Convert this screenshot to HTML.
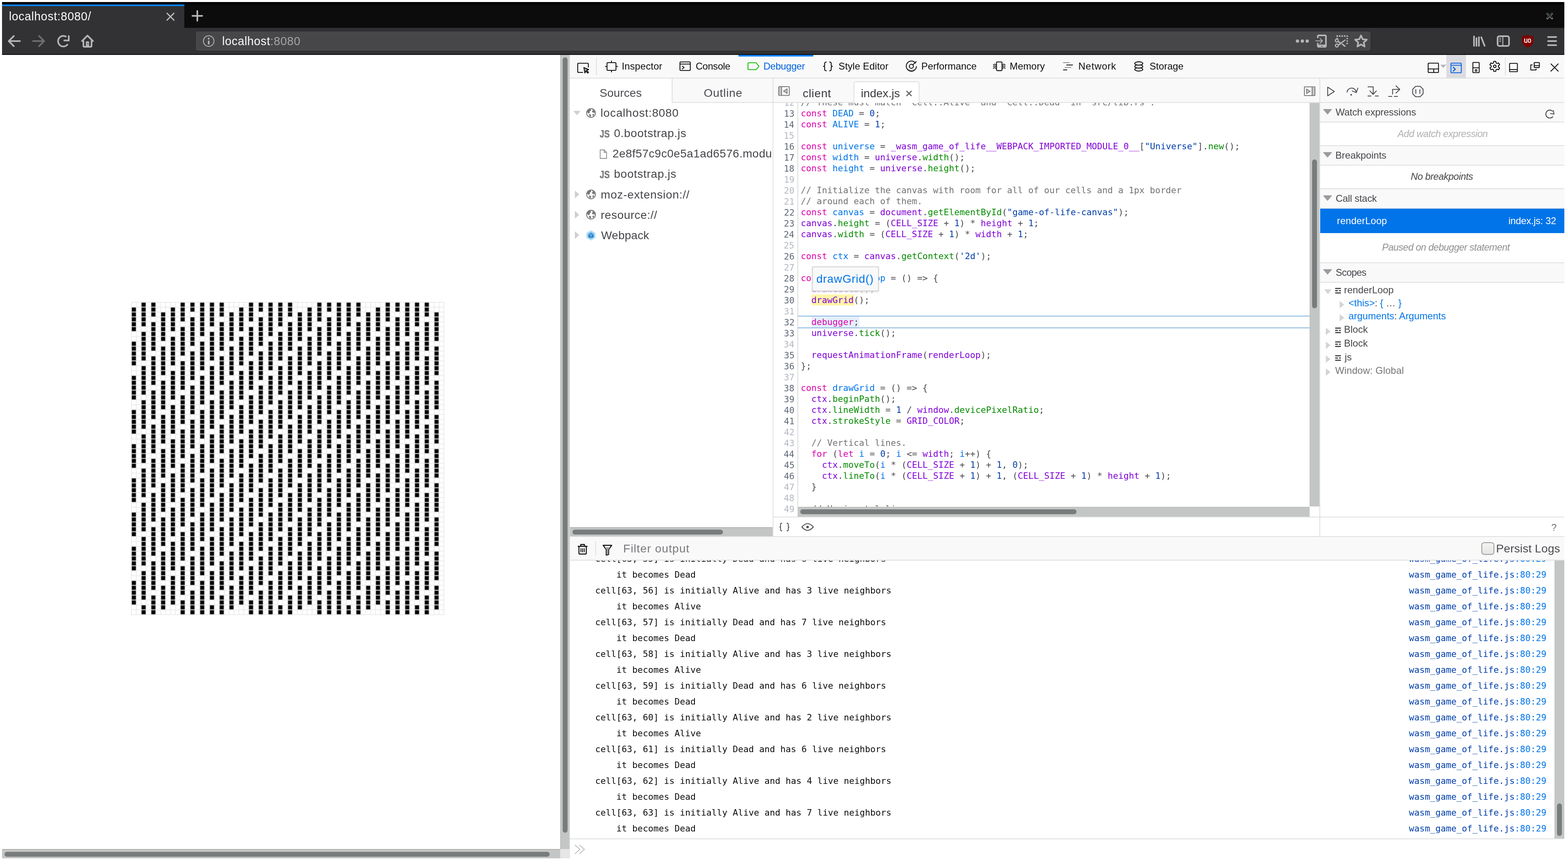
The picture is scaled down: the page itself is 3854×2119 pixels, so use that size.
<!DOCTYPE html>
<html lang="en"><head><meta charset="utf-8"><title>localhost:8080/</title>
<style>
*{box-sizing:border-box}
html,body{margin:0;padding:0}
body{width:3854px;height:2119px;background:#fff;position:relative;overflow:hidden;font-family:"Liberation Sans",sans-serif}
.a{position:absolute}
.t{line-height:1;white-space:pre;margin:0;padding:0}
.s{font-family:"Liberation Sans",sans-serif}
.m{font-family:"DejaVu Sans Mono","Liberation Mono",monospace}
.d{font-family:"DejaVu Sans","Liberation Sans",sans-serif}
.b{font-weight:bold}
.i{font-style:italic}
svg{position:absolute;left:0;top:0;overflow:visible}
#root{position:absolute;left:0;top:0;width:3854px;height:2119px;will-change:transform}
</style></head>
<body>
<div id="root">
<div class="a" style="left:5px;top:5px;width:3840px;height:6px;background:#000;"></div><div class="a" style="left:5px;top:11px;width:3840px;height:57px;background:#0c0c0d;"></div><div class="a" style="left:5px;top:11px;width:448px;height:4px;background:#0a84ff;"></div><div class="a" style="left:5px;top:15px;width:448px;height:53px;background:#323234;"></div><div class="a" style="left:5px;top:68px;width:3840px;height:65px;background:#323234;"></div><div class="a" style="left:453px;top:68px;width:3392px;height:1px;background:#1e1e1f;"></div><div class="a" style="left:5px;top:133px;width:3840px;height:2px;background:#0a0a0b;"></div><div class="a" style="left:481px;top:77px;width:2888px;height:48px;background:#474749;border-radius:5px;box-shadow:0 0 0 1px rgba(0,0,0,.28);"></div><span class="a t s" style="left:21.88px;top:26px;font-size:28.6px;color:#f9f9fa;letter-spacing:0.67px;">localhost:8080/</span><span class="a t s" style="left:546.12px;top:87px;font-size:28.6px;color:#f9f9fa;letter-spacing:0.58px;">localhost<span style="color:#a3a3a5">:8080</span></span><svg class="a" style="left:322px;top:742px" width="770" height="770" viewBox="0 0 770 770" shape-rendering="crispEdges"><defs><filter id="cb" x="0" y="0" width="1" height="1" color-interpolation-filters="sRGB"><feConvolveMatrix order="3" kernelMatrix="1 2 1 2 4 2 1 2 1" divisor="16" edgeMode="duplicate" preserveAlpha="true"/></filter><pattern id="gv" width="12" height="770" patternUnits="userSpaceOnUse"><rect width="2" height="770" fill="#ebebeb"/></pattern><pattern id="gh" width="770" height="12" patternUnits="userSpaceOnUse"><rect width="770" height="2" fill="#ebebeb"/></pattern></defs><g filter="url(#cb)"><rect width="770" height="770" fill="#fff"/><path d="M2 14h10v58h-10zM2 98h10v58h-10zM2 182h10v58h-10zM2 266h10v58h-10zM2 350h10v58h-10zM2 434h10v58h-10zM2 518h10v58h-10zM2 602h10v58h-10zM2 686h10v58h-10zM26 2h10v58h-10zM26 74h10v70h-10zM26 158h10v70h-10zM26 242h10v70h-10zM26 326h10v70h-10zM26 410h10v70h-10zM26 494h10v70h-10zM26 578h10v70h-10zM26 662h10v70h-10zM26 746h10v22h-10zM50 2h10v34h-10zM50 50h10v70h-10zM50 134h10v70h-10zM50 218h10v70h-10zM50 302h10v70h-10zM50 386h10v70h-10zM50 470h10v70h-10zM50 554h10v70h-10zM50 638h10v70h-10zM50 722h10v46h-10zM74 26h10v70h-10zM74 110h10v70h-10zM74 194h10v70h-10zM74 278h10v70h-10zM74 362h10v70h-10zM74 446h10v70h-10zM74 530h10v70h-10zM74 614h10v70h-10zM74 698h10v58h-10zM98 14h10v58h-10zM98 86h10v70h-10zM98 170h10v70h-10zM98 254h10v70h-10zM98 338h10v70h-10zM98 422h10v70h-10zM98 506h10v70h-10zM98 590h10v70h-10zM98 674h10v70h-10zM122 2h10v46h-10zM122 62h10v70h-10zM122 146h10v70h-10zM122 230h10v70h-10zM122 314h10v70h-10zM122 398h10v70h-10zM122 482h10v70h-10zM122 566h10v70h-10zM122 650h10v70h-10zM122 734h10v34h-10zM146 2h10v22h-10zM146 38h10v70h-10zM146 122h10v70h-10zM146 206h10v70h-10zM146 290h10v70h-10zM146 374h10v70h-10zM146 458h10v70h-10zM146 542h10v70h-10zM146 626h10v70h-10zM146 710h10v58h-10zM170 2h10v82h-10zM170 98h10v70h-10zM170 182h10v70h-10zM170 266h10v70h-10zM170 350h10v70h-10zM170 434h10v70h-10zM170 518h10v70h-10zM170 602h10v70h-10zM170 686h10v82h-10zM194 2h10v58h-10zM194 74h10v70h-10zM194 158h10v70h-10zM194 242h10v70h-10zM194 326h10v70h-10zM194 410h10v70h-10zM194 494h10v70h-10zM194 578h10v70h-10zM194 662h10v70h-10zM194 746h10v22h-10zM218 2h10v34h-10zM218 50h10v70h-10zM218 134h10v70h-10zM218 218h10v70h-10zM218 302h10v70h-10zM218 386h10v70h-10zM218 470h10v70h-10zM218 554h10v70h-10zM218 638h10v70h-10zM218 722h10v46h-10zM242 26h10v70h-10zM242 110h10v70h-10zM242 194h10v70h-10zM242 278h10v70h-10zM242 362h10v70h-10zM242 446h10v70h-10zM242 530h10v70h-10zM242 614h10v70h-10zM242 698h10v58h-10zM266 14h10v58h-10zM266 86h10v70h-10zM266 170h10v70h-10zM266 254h10v70h-10zM266 338h10v70h-10zM266 422h10v70h-10zM266 506h10v70h-10zM266 590h10v70h-10zM266 674h10v70h-10zM290 2h10v46h-10zM290 62h10v70h-10zM290 146h10v70h-10zM290 230h10v70h-10zM290 314h10v70h-10zM290 398h10v70h-10zM290 482h10v70h-10zM290 566h10v70h-10zM290 650h10v70h-10zM290 734h10v34h-10zM314 2h10v22h-10zM314 38h10v70h-10zM314 122h10v70h-10zM314 206h10v70h-10zM314 290h10v70h-10zM314 374h10v70h-10zM314 458h10v70h-10zM314 542h10v70h-10zM314 626h10v70h-10zM314 710h10v58h-10zM338 2h10v82h-10zM338 98h10v70h-10zM338 182h10v70h-10zM338 266h10v70h-10zM338 350h10v70h-10zM338 434h10v70h-10zM338 518h10v70h-10zM338 602h10v70h-10zM338 686h10v82h-10zM362 2h10v58h-10zM362 74h10v70h-10zM362 158h10v70h-10zM362 242h10v70h-10zM362 326h10v70h-10zM362 410h10v70h-10zM362 494h10v70h-10zM362 578h10v70h-10zM362 662h10v70h-10zM362 746h10v22h-10zM386 2h10v34h-10zM386 50h10v70h-10zM386 134h10v70h-10zM386 218h10v70h-10zM386 302h10v70h-10zM386 386h10v70h-10zM386 470h10v70h-10zM386 554h10v70h-10zM386 638h10v70h-10zM386 722h10v46h-10zM410 26h10v70h-10zM410 110h10v70h-10zM410 194h10v70h-10zM410 278h10v70h-10zM410 362h10v70h-10zM410 446h10v70h-10zM410 530h10v70h-10zM410 614h10v70h-10zM410 698h10v58h-10zM434 14h10v58h-10zM434 86h10v70h-10zM434 170h10v70h-10zM434 254h10v70h-10zM434 338h10v70h-10zM434 422h10v70h-10zM434 506h10v70h-10zM434 590h10v70h-10zM434 674h10v70h-10zM458 2h10v46h-10zM458 62h10v70h-10zM458 146h10v70h-10zM458 230h10v70h-10zM458 314h10v70h-10zM458 398h10v70h-10zM458 482h10v70h-10zM458 566h10v70h-10zM458 650h10v70h-10zM458 734h10v34h-10zM482 2h10v22h-10zM482 38h10v70h-10zM482 122h10v70h-10zM482 206h10v70h-10zM482 290h10v70h-10zM482 374h10v70h-10zM482 458h10v70h-10zM482 542h10v70h-10zM482 626h10v70h-10zM482 710h10v58h-10zM506 2h10v82h-10zM506 98h10v70h-10zM506 182h10v70h-10zM506 266h10v70h-10zM506 350h10v70h-10zM506 434h10v70h-10zM506 518h10v70h-10zM506 602h10v70h-10zM506 686h10v82h-10zM530 2h10v58h-10zM530 74h10v70h-10zM530 158h10v70h-10zM530 242h10v70h-10zM530 326h10v70h-10zM530 410h10v70h-10zM530 494h10v70h-10zM530 578h10v70h-10zM530 662h10v70h-10zM530 746h10v22h-10zM554 2h10v34h-10zM554 50h10v70h-10zM554 134h10v70h-10zM554 218h10v70h-10zM554 302h10v70h-10zM554 386h10v70h-10zM554 470h10v70h-10zM554 554h10v70h-10zM554 638h10v70h-10zM554 722h10v46h-10zM578 26h10v70h-10zM578 110h10v70h-10zM578 194h10v70h-10zM578 278h10v70h-10zM578 362h10v70h-10zM578 446h10v70h-10zM578 530h10v70h-10zM578 614h10v70h-10zM578 698h10v58h-10zM602 14h10v58h-10zM602 86h10v70h-10zM602 170h10v70h-10zM602 254h10v70h-10zM602 338h10v70h-10zM602 422h10v70h-10zM602 506h10v70h-10zM602 590h10v70h-10zM602 674h10v70h-10zM626 2h10v46h-10zM626 62h10v70h-10zM626 146h10v70h-10zM626 230h10v70h-10zM626 314h10v70h-10zM626 398h10v70h-10zM626 482h10v70h-10zM626 566h10v70h-10zM626 650h10v70h-10zM626 734h10v34h-10zM650 2h10v22h-10zM650 38h10v70h-10zM650 122h10v70h-10zM650 206h10v70h-10zM650 290h10v70h-10zM650 374h10v70h-10zM650 458h10v70h-10zM650 542h10v70h-10zM650 626h10v70h-10zM650 710h10v58h-10zM674 2h10v82h-10zM674 98h10v70h-10zM674 182h10v70h-10zM674 266h10v70h-10zM674 350h10v70h-10zM674 434h10v70h-10zM674 518h10v70h-10zM674 602h10v70h-10zM674 686h10v82h-10zM698 2h10v58h-10zM698 74h10v70h-10zM698 158h10v70h-10zM698 242h10v70h-10zM698 326h10v70h-10zM698 410h10v70h-10zM698 494h10v70h-10zM698 578h10v70h-10zM698 662h10v70h-10zM698 746h10v22h-10zM722 2h10v34h-10zM722 50h10v70h-10zM722 134h10v70h-10zM722 218h10v70h-10zM722 302h10v70h-10zM722 386h10v70h-10zM722 470h10v70h-10zM722 554h10v70h-10zM722 638h10v70h-10zM722 722h10v46h-10zM746 26h10v70h-10zM746 110h10v70h-10zM746 194h10v70h-10zM746 278h10v70h-10zM746 362h10v70h-10zM746 446h10v70h-10zM746 530h10v70h-10zM746 614h10v70h-10zM746 698h10v58h-10z" fill="#000"/><rect width="770" height="770" fill="url(#gh)"/><rect width="770" height="770" fill="url(#gv)"/></g></svg><div class="a" style="left:1377px;top:135px;width:24px;height:1952px;background:#c4c6c5;border-left:1px solid #b2b3b0;border-right:2px solid #d9dad9;"></div><div class="a" style="left:1383px;top:141px;width:12px;height:1906px;background:#787c7d;border-radius:6px;"></div><div class="a" style="left:5px;top:2087px;width:1372px;height:23px;background:#c4c6c5;border-top:2px solid #b2b3b0;"></div><div class="a" style="left:11px;top:2093.5px;width:1340px;height:12px;background:#787c7d;border-radius:6px;"></div><div class="a" style="left:1377px;top:2087px;width:24px;height:23px;background:#e6e6e6;"></div><div class="a" style="left:1401px;top:135px;width:2444px;height:56px;background:#f9f9fa;"></div><div class="a" style="left:1401px;top:191px;width:2444px;height:2px;background:#dfdfe1;"></div><div class="a" style="left:1815px;top:135px;width:184px;height:3.5px;background:#0a84ff;"></div><div class="a" style="left:3555px;top:135px;width:48px;height:56px;background:#dcdce0;"></div><div class="a" style="left:1465px;top:141.5px;width:2px;height:43px;background:#e0e0e2;"></div><div class="a" style="left:3698.7px;top:141px;width:2px;height:44px;background:#e0e0e2;"></div><span class="a t s" style="left:1528.28px;top:151px;font-size:23.8px;color:#0c0c0d;letter-spacing:0.2px;">Inspector</span><span class="a t s" style="left:1709.88px;top:151px;font-size:23.8px;color:#0c0c0d;letter-spacing:-0.31px;">Console</span><span class="a t s" style="left:1876.53px;top:151px;font-size:23.8px;color:#0060df;letter-spacing:-0.35px;">Debugger</span><span class="a t s" style="left:2061px;top:151px;font-size:23.8px;color:#0c0c0d;letter-spacing:0.08px;">Style Editor</span><span class="a t s" style="left:2264.62px;top:151px;font-size:23.8px;color:#0c0c0d;letter-spacing:-0.04px;">Performance</span><span class="a t s" style="left:2481.82px;top:151px;font-size:23.8px;color:#0c0c0d;letter-spacing:0.06px;">Memory</span><span class="a t s" style="left:2650.62px;top:151px;font-size:23.8px;color:#0c0c0d;letter-spacing:0.83px;">Network</span><span class="a t s" style="left:2825.4px;top:151px;font-size:23.8px;color:#0c0c0d;letter-spacing:0.04px;">Storage</span><div class="a" style="left:1401px;top:193px;width:250px;height:60px;background:#fff;"></div><div class="a" style="left:1651px;top:193px;width:249px;height:60px;background:#f9f9fa;border-left:2px solid #e0e0e2;border-bottom:2px solid #e0e0e2;"></div><span class="a t s" style="left:1473.75px;top:214px;font-size:28.2px;color:#4a4a4f;letter-spacing:0.03px;">Sources</span><span class="a t s" style="left:1729.75px;top:214px;font-size:28.2px;color:#4a4a4f;letter-spacing:0.86px;">Outline</span><div class="a" style="left:1401px;top:254px;width:498px;height:1042px;overflow:hidden"><span class="a t s" style="left:75.12px;top:9px;font-size:28.2px;color:#45454a;letter-spacing:0.75px;">localhost:8080</span><span class="a t s" style="left:108px;top:59px;font-size:28.2px;color:#45454a;letter-spacing:0.64px;">0.bootstrap.js</span><span class="a t s" style="left:104.62px;top:109px;font-size:28.2px;color:#45454a;letter-spacing:0.45px;">2e8f57c9c0e5a1ad6576.module.wasm</span><span class="a t s" style="left:107.95px;top:159px;font-size:28.2px;color:#45454a;letter-spacing:0.68px;">bootstrap.js</span><span class="a t s" style="left:75.42px;top:210px;font-size:28.2px;color:#45454a;letter-spacing:0.75px;">moz-extension://</span><span class="a t s" style="left:75.42px;top:260px;font-size:28.2px;color:#45454a;letter-spacing:0.55px;">resource://</span><span class="a t s" style="left:76.58px;top:310px;font-size:28.2px;color:#45454a;letter-spacing:0.15px;">Webpack</span></div><span class="a t s b" style="left:1474.1px;top:317px;font-size:25.5px;color:#7d7d80;transform:scaleX(0.7896);transform-origin:0 0;-webkit-text-stroke:.7px #7d7d80;">JS</span><span class="a t s b" style="left:1474.1px;top:417px;font-size:25.5px;color:#7d7d80;transform:scaleX(0.7896);transform-origin:0 0;-webkit-text-stroke:.7px #7d7d80;">JS</span><div class="a" style="left:1401px;top:1296px;width:498px;height:22px;background:#c4c6c5;border-top:2px solid #b2b3b0;"></div><div class="a" style="left:1407px;top:1302px;width:370px;height:12px;background:#787c7d;border-radius:6px;"></div><div class="a" style="left:1899px;top:193px;width:2px;height:1125px;background:#e0e0e2;"></div><div class="a" style="left:1901px;top:193px;width:1342px;height:58px;background:#f9f9fa;"></div><div class="a" style="left:1901px;top:251px;width:1342px;height:2px;background:#e0e0e2;"></div><div class="a" style="left:2097.5px;top:200px;width:162px;height:53px;background:#fff;border:2px solid #e0e0e2;border-bottom:none;border-radius:5px 5px 0 0;"></div><span class="a t s" style="left:1972.88px;top:215px;font-size:28.2px;color:#38383d;letter-spacing:0.74px;">client</span><span class="a t s" style="left:2116.12px;top:215px;font-size:28.2px;color:#38383d;letter-spacing:0.04px;">index.js</span><div class="a" style="left:1901px;top:253px;width:1342px;height:1017px;overflow:hidden;background:#fff"><div class="a" style="left:58.5px;top:0px;width:2px;height:1017px;background:#dcdcde;"></div><div class="a" style="left:94px;top:471px;width:104.5px;height:27px;background:#fff5a8;"></div><div class="a" style="left:60px;top:523px;width:1260px;height:2px;background:#85b5dd;"></div><div class="a" style="left:60px;top:552px;width:1260px;height:2px;background:#85b5dd;"></div><div class="a" style="left:94px;top:525px;width:117px;height:27px;background:#e4effc;"></div><span class="a t m" style="left:26.04px;top:-11px;font-size:21.6px;color:#b3b8c0;">12</span><span class="a t m" style="left:67.3px;top:-12px;font-size:21.6px;color:#4a4a4f;"><span style="color:#737373">// These must match `Cell::Alive` and `Cell::Dead` in `src/lib.rs`.</span></span><span class="a t m" style="left:25.79px;top:16px;font-size:21.6px;color:#5f6876;">13</span><span class="a t m" style="left:67.3px;top:15px;font-size:21.6px;color:#4a4a4f;"><span style="color:#dd00a9">const</span> <span style="color:#0074e8">DEAD</span> = <span style="color:#003eaa">0</span>;</span><span class="a t m" style="left:25.29px;top:43px;font-size:21.6px;color:#5f6876;">14</span><span class="a t m" style="left:67.3px;top:42px;font-size:21.6px;color:#4a4a4f;"><span style="color:#dd00a9">const</span> <span style="color:#0074e8">ALIVE</span> = <span style="color:#003eaa">1</span>;</span><span class="a t m" style="left:25.33px;top:70px;font-size:21.6px;color:#b3b8c0;">15</span><span class="a t m" style="left:25.67px;top:97px;font-size:21.6px;color:#5f6876;">16</span><span class="a t m" style="left:67.3px;top:96px;font-size:21.6px;color:#4a4a4f;"><span style="color:#dd00a9">const</span> <span style="color:#0074e8">universe</span> = <span style="color:#8000d7">_wasm_game_of_life__WEBPACK_IMPORTED_MODULE_0__</span>[<span style="color:#003eaa">&quot;Universe&quot;</span>].<span style="color:#058b00">new</span>();</span><span class="a t m" style="left:25.79px;top:124px;font-size:21.6px;color:#5f6876;">17</span><span class="a t m" style="left:67.3px;top:123px;font-size:21.6px;color:#4a4a4f;"><span style="color:#dd00a9">const</span> <span style="color:#0074e8">width</span> = <span style="color:#8000d7">universe</span>.<span style="color:#058b00">width</span>();</span><span class="a t m" style="left:25.54px;top:151px;font-size:21.6px;color:#5f6876;">18</span><span class="a t m" style="left:67.3px;top:150px;font-size:21.6px;color:#4a4a4f;"><span style="color:#dd00a9">const</span> <span style="color:#0074e8">height</span> = <span style="color:#8000d7">universe</span>.<span style="color:#058b00">height</span>();</span><span class="a t m" style="left:25.67px;top:178px;font-size:21.6px;color:#b3b8c0;">19</span><span class="a t m" style="left:25.67px;top:205px;font-size:21.6px;color:#b3b8c0;">20</span><span class="a t m" style="left:67.3px;top:204px;font-size:21.6px;color:#4a4a4f;"><span style="color:#737373">// Initialize the canvas with room for all of our cells and a 1px border</span></span><span class="a t m" style="left:25.67px;top:232px;font-size:21.6px;color:#b3b8c0;">21</span><span class="a t m" style="left:67.3px;top:231px;font-size:21.6px;color:#4a4a4f;"><span style="color:#737373">// around each of them.</span></span><span class="a t m" style="left:26.04px;top:259px;font-size:21.6px;color:#5f6876;">22</span><span class="a t m" style="left:67.3px;top:258px;font-size:21.6px;color:#4a4a4f;"><span style="color:#dd00a9">const</span> <span style="color:#0074e8">canvas</span> = <span style="color:#8000d7">document</span>.<span style="color:#058b00">getElementById</span>(<span style="color:#003eaa">&quot;game-of-life-canvas&quot;</span>);</span><span class="a t m" style="left:25.79px;top:286px;font-size:21.6px;color:#5f6876;">23</span><span class="a t m" style="left:67.3px;top:285px;font-size:21.6px;color:#4a4a4f;"><span style="color:#8000d7">canvas</span>.<span style="color:#058b00">height</span> = (<span style="color:#8000d7">CELL_SIZE</span> + <span style="color:#003eaa">1</span>) * <span style="color:#8000d7">height</span> + <span style="color:#003eaa">1</span>;</span><span class="a t m" style="left:25.29px;top:313px;font-size:21.6px;color:#5f6876;">24</span><span class="a t m" style="left:67.3px;top:312px;font-size:21.6px;color:#4a4a4f;"><span style="color:#8000d7">canvas</span>.<span style="color:#058b00">width</span> = (<span style="color:#8000d7">CELL_SIZE</span> + <span style="color:#003eaa">1</span>) * <span style="color:#8000d7">width</span> + <span style="color:#003eaa">1</span>;</span><span class="a t m" style="left:25.33px;top:340px;font-size:21.6px;color:#b3b8c0;">25</span><span class="a t m" style="left:25.67px;top:367px;font-size:21.6px;color:#5f6876;">26</span><span class="a t m" style="left:67.3px;top:366px;font-size:21.6px;color:#4a4a4f;"><span style="color:#dd00a9">const</span> <span style="color:#0074e8">ctx</span> = <span style="color:#8000d7">canvas</span>.<span style="color:#058b00">getContext</span>(<span style="color:#003eaa">&#x27;2d&#x27;</span>);</span><span class="a t m" style="left:25.79px;top:394px;font-size:21.6px;color:#b3b8c0;">27</span><span class="a t m" style="left:25.54px;top:421px;font-size:21.6px;color:#5f6876;">28</span><span class="a t m" style="left:67.3px;top:420px;font-size:21.6px;color:#4a4a4f;"><span style="color:#dd00a9">const</span> <span style="color:#0074e8">renderLoop</span> = () =&gt; {</span><span class="a t m" style="left:25.67px;top:448px;font-size:21.6px;color:#5f6876;">29</span><span class="a t m" style="left:67.3px;top:447px;font-size:21.6px;color:#4a4a4f;opacity:.35;">  <span style="color:#8000d7">drawCells</span>();</span><span class="a t m" style="left:25.67px;top:475px;font-size:21.6px;color:#5f6876;">30</span><span class="a t m" style="left:67.3px;top:474px;font-size:21.6px;color:#4a4a4f;">  <span style="color:#8000d7">drawGrid</span>();</span><span class="a t m" style="left:25.67px;top:502px;font-size:21.6px;color:#b3b8c0;">31</span><span class="a t m" style="left:26.04px;top:529px;font-size:21.6px;color:#5f6876;">32</span><span class="a t m" style="left:67.3px;top:528px;font-size:21.6px;color:#4a4a4f;">  <span style="color:#dd00a9">debugger</span>;</span><span class="a t m" style="left:25.79px;top:556px;font-size:21.6px;color:#5f6876;">33</span><span class="a t m" style="left:67.3px;top:555px;font-size:21.6px;color:#4a4a4f;">  <span style="color:#8000d7">universe</span>.<span style="color:#058b00">tick</span>();</span><span class="a t m" style="left:25.29px;top:583px;font-size:21.6px;color:#b3b8c0;">34</span><span class="a t m" style="left:25.92px;top:610px;font-size:21.6px;color:#5f6876;">35</span><span class="a t m" style="left:67.3px;top:609px;font-size:21.6px;color:#4a4a4f;">  <span style="color:#8000d7">requestAnimationFrame</span>(<span style="color:#8000d7">renderLoop</span>);</span><span class="a t m" style="left:25.67px;top:637px;font-size:21.6px;color:#5f6876;">36</span><span class="a t m" style="left:67.3px;top:636px;font-size:21.6px;color:#4a4a4f;">};</span><span class="a t m" style="left:25.79px;top:664px;font-size:21.6px;color:#b3b8c0;">37</span><span class="a t m" style="left:25.54px;top:691px;font-size:21.6px;color:#5f6876;">38</span><span class="a t m" style="left:67.3px;top:690px;font-size:21.6px;color:#4a4a4f;"><span style="color:#dd00a9">const</span> <span style="color:#0074e8">drawGrid</span> = () =&gt; {</span><span class="a t m" style="left:25.67px;top:718px;font-size:21.6px;color:#5f6876;">39</span><span class="a t m" style="left:67.3px;top:717px;font-size:21.6px;color:#4a4a4f;">  <span style="color:#8000d7">ctx</span>.<span style="color:#058b00">beginPath</span>();</span><span class="a t m" style="left:25.67px;top:745px;font-size:21.6px;color:#5f6876;">40</span><span class="a t m" style="left:67.3px;top:744px;font-size:21.6px;color:#4a4a4f;">  <span style="color:#8000d7">ctx</span>.<span style="color:#058b00">lineWidth</span> = <span style="color:#003eaa">1</span> / <span style="color:#8000d7">window</span>.<span style="color:#058b00">devicePixelRatio</span>;</span><span class="a t m" style="left:25.67px;top:772px;font-size:21.6px;color:#5f6876;">41</span><span class="a t m" style="left:67.3px;top:771px;font-size:21.6px;color:#4a4a4f;">  <span style="color:#8000d7">ctx</span>.<span style="color:#058b00">strokeStyle</span> = <span style="color:#8000d7">GRID_COLOR</span>;</span><span class="a t m" style="left:26.04px;top:799px;font-size:21.6px;color:#b3b8c0;">42</span><span class="a t m" style="left:25.79px;top:826px;font-size:21.6px;color:#b3b8c0;">43</span><span class="a t m" style="left:67.3px;top:825px;font-size:21.6px;color:#4a4a4f;">  <span style="color:#737373">// Vertical lines.</span></span><span class="a t m" style="left:25.29px;top:853px;font-size:21.6px;color:#5f6876;">44</span><span class="a t m" style="left:67.3px;top:852px;font-size:21.6px;color:#4a4a4f;">  <span style="color:#dd00a9">for</span> (<span style="color:#dd00a9">let</span> <span style="color:#0074e8">i</span> = <span style="color:#003eaa">0</span>; <span style="color:#0074e8">i</span> &lt;= <span style="color:#8000d7">width</span>; <span style="color:#0074e8">i</span>++) {</span><span class="a t m" style="left:25.92px;top:880px;font-size:21.6px;color:#5f6876;">45</span><span class="a t m" style="left:67.3px;top:879px;font-size:21.6px;color:#4a4a4f;">    <span style="color:#8000d7">ctx</span>.<span style="color:#058b00">moveTo</span>(<span style="color:#0074e8">i</span> * (<span style="color:#8000d7">CELL_SIZE</span> + <span style="color:#003eaa">1</span>) + <span style="color:#003eaa">1</span>, <span style="color:#003eaa">0</span>);</span><span class="a t m" style="left:25.67px;top:907px;font-size:21.6px;color:#5f6876;">46</span><span class="a t m" style="left:67.3px;top:906px;font-size:21.6px;color:#4a4a4f;">    <span style="color:#8000d7">ctx</span>.<span style="color:#058b00">lineTo</span>(<span style="color:#0074e8">i</span> * (<span style="color:#8000d7">CELL_SIZE</span> + <span style="color:#003eaa">1</span>) + <span style="color:#003eaa">1</span>, (<span style="color:#8000d7">CELL_SIZE</span> + <span style="color:#003eaa">1</span>) * <span style="color:#8000d7">height</span> + <span style="color:#003eaa">1</span>);</span><span class="a t m" style="left:25.79px;top:934px;font-size:21.6px;color:#b3b8c0;">47</span><span class="a t m" style="left:67.3px;top:933px;font-size:21.6px;color:#4a4a4f;">  }</span><span class="a t m" style="left:25.54px;top:961px;font-size:21.6px;color:#b3b8c0;">48</span><span class="a t m" style="left:25.67px;top:988px;font-size:21.6px;color:#b3b8c0;">49</span><span class="a t m" style="left:67.3px;top:987px;font-size:21.6px;color:#4a4a4f;">  <span style="color:#737373">// Horizontal lines.</span></span><div class="a" style="left:94.5px;top:401.5px;width:164px;height:61px;background:#f9f9fa;border:2px solid #d4d4d6;box-shadow:0 2px 5px rgba(0,0,0,.12);"></div><span class="a t s" style="left:105.38px;top:419px;font-size:28px;color:#0074e8;letter-spacing:0.9px;">drawGrid()</span></div><div class="a" style="left:3219px;top:253px;width:24px;height:992px;background:#c4c6c5;border-left:1px solid #b2b3b0;"></div><div class="a" style="left:3225px;top:392px;width:12px;height:366px;background:#787c7d;border-radius:6px;"></div><div class="a" style="left:1961px;top:1246px;width:1258px;height:24px;background:#c4c6c5;border-top:1px solid #b2b3b0;"></div><div class="a" style="left:1967px;top:1252px;width:679px;height:12px;background:#787c7d;border-radius:6px;"></div><div class="a" style="left:3219px;top:1245px;width:24px;height:26px;background:#fff;"></div><div class="a" style="left:1901px;top:1270px;width:1342px;height:2px;background:#e0e0e2;"></div><div class="a" style="left:1901px;top:1272px;width:1342px;height:46px;background:#fff;"></div><div class="a" style="left:3243px;top:193px;width:2px;height:1125px;background:#e0e0e2;"></div><div class="a" style="left:3245px;top:193px;width:600px;height:58px;background:#f9f9fa;"></div><div class="a" style="left:3245px;top:251px;width:600px;height:2px;background:#e0e0e2;"></div><div class="a" style="left:3245px;top:253px;width:600px;height:47px;background:#f9f9fa;"></div><div class="a" style="left:3245px;top:299px;width:600px;height:2px;background:#e0e0e2;"></div><span class="a t s" style="left:3282.8px;top:264px;font-size:23.8px;color:#45454a;letter-spacing:-0.15px;">Watch expressions</span><div class="a" style="left:3245px;top:358.7px;width:600px;height:47.5px;background:#f9f9fa;"></div><div class="a" style="left:3245px;top:405.2px;width:600px;height:2px;background:#e0e0e2;"></div><div class="a" style="left:3245px;top:356.7px;width:600px;height:2px;background:#e0e0e2;"></div><span class="a t s" style="left:3282.22px;top:370px;font-size:23.8px;color:#45454a;letter-spacing:-0.02px;">Breakpoints</span><div class="a" style="left:3245px;top:465px;width:600px;height:46.6px;background:#f9f9fa;"></div><div class="a" style="left:3245px;top:510.6px;width:600px;height:2px;background:#e0e0e2;"></div><div class="a" style="left:3245px;top:463px;width:600px;height:2px;background:#e0e0e2;"></div><span class="a t s" style="left:3282.97px;top:476px;font-size:23.8px;color:#45454a;letter-spacing:-0.21px;">Call stack</span><div class="a" style="left:3245px;top:647.4px;width:600px;height:46.4px;background:#f9f9fa;"></div><div class="a" style="left:3245px;top:692.8px;width:600px;height:2px;background:#e0e0e2;"></div><div class="a" style="left:3245px;top:645.4px;width:600px;height:2px;background:#e0e0e2;"></div><span class="a t s" style="left:3283.1px;top:658px;font-size:23.8px;color:#45454a;letter-spacing:-0.74px;">Scopes</span><span class="a t s i" style="left:3434.95px;top:317px;font-size:23.8px;color:#b1b1b3;letter-spacing:-0.56px;">Add watch expression</span><span class="a t s i" style="left:3467.47px;top:422px;font-size:23.8px;color:#45454a;letter-spacing:-0.51px;">No breakpoints</span><div class="a" style="left:3245px;top:512.8px;width:600px;height:59.9px;background:#0074e8;"></div><span class="a t s" style="left:3286.1px;top:531px;font-size:23.8px;color:#fff;letter-spacing:0.13px;">renderLoop</span><span class="a t s" style="left:3707.5px;top:531px;font-size:23.8px;color:#fff;letter-spacing:-0.27px;">index.js: 32</span><span class="a t s i" style="left:3396.97px;top:596px;font-size:23.8px;color:#8f8f92;letter-spacing:-0.66px;">Paused on debugger statement</span><span class="a t s" style="left:3303.5px;top:701px;font-size:23.8px;color:#45454a;letter-spacing:0.03px;">renderLoop</span><span class="a t s" style="left:3314.47px;top:733px;font-size:23.8px;color:#0074e8;letter-spacing:-0.05px;">&lt;this&gt;<span style="color:#4a4a4f">:</span> { <span style="color:#4a4a4f">…</span> }</span><span class="a t s" style="left:3314.6px;top:765px;font-size:23.8px;color:#0074e8;letter-spacing:-0.01px;">arguments<span style="color:#4a4a4f">:</span> Arguments</span><span class="a t s" style="left:3303.53px;top:798px;font-size:23.8px;color:#45454a;letter-spacing:0.05px;">Block</span><span class="a t s" style="left:3303.53px;top:832px;font-size:23.8px;color:#45454a;letter-spacing:0.05px;">Block</span><span class="a t s" style="left:3305.32px;top:866px;font-size:23.8px;color:#45454a;">js</span><span class="a t s" style="left:3281.7px;top:899px;font-size:23.8px;color:#737373;letter-spacing:0.16px;">Window: Global</span><div class="a" style="left:3245px;top:1270px;width:600px;height:2px;background:#e0e0e2;"></div><span class="a t s" style="left:3812.88px;top:1286px;font-size:23.6px;color:#737373;">?</span><div class="a" style="left:1401px;top:1318px;width:2444px;height:2px;background:#dfdfe1;"></div><div class="a" style="left:1401px;top:1320px;width:2444px;height:56px;background:#f9f9fa;"></div><div class="a" style="left:1401px;top:1376px;width:2444px;height:2px;background:#dfdfe1;"></div><div class="a" style="left:1463px;top:1331px;width:2px;height:34px;background:#e0e0e2;"></div><span class="a t s" style="left:1531.75px;top:1334px;font-size:28.4px;color:#7a7a7d;letter-spacing:1.04px;">Filter output</span><span class="a t s" style="left:3677.25px;top:1334px;font-size:28.4px;color:#4a4a4f;letter-spacing:0.09px;">Persist Logs</span><div class="a" style="left:3641px;top:1332.5px;width:31.5px;height:31.5px;background:linear-gradient(#f4f4f3,#e4e4e2);border:2px solid #9a9a96;border-radius:7px;"></div><div class="a" style="left:1401px;top:1378px;width:2420px;height:683px;overflow:hidden;background:#fff"><span class="a t m" style="left:61.9px;top:-15px;font-size:21.6px;color:#0c0c0d;">cell[63, 55] is initially Dead and has 6 live neighbors</span><span class="a t m" style="left:2062px;top:-15px;font-size:21.6px;color:#003eaa;">wasm_game_of_life.js<span style="color:#0074e8">:80:29</span></span><span class="a t m" style="left:61.9px;top:24px;font-size:21.6px;color:#0c0c0d;">    it becomes Dead</span><span class="a t m" style="left:2062px;top:24px;font-size:21.6px;color:#003eaa;">wasm_game_of_life.js<span style="color:#0074e8">:80:29</span></span><span class="a t m" style="left:61.9px;top:63px;font-size:21.6px;color:#0c0c0d;">cell[63, 56] is initially Alive and has 3 live neighbors</span><span class="a t m" style="left:2062px;top:63px;font-size:21.6px;color:#003eaa;">wasm_game_of_life.js<span style="color:#0074e8">:80:29</span></span><span class="a t m" style="left:61.9px;top:102px;font-size:21.6px;color:#0c0c0d;">    it becomes Alive</span><span class="a t m" style="left:2062px;top:102px;font-size:21.6px;color:#003eaa;">wasm_game_of_life.js<span style="color:#0074e8">:80:29</span></span><span class="a t m" style="left:61.9px;top:141px;font-size:21.6px;color:#0c0c0d;">cell[63, 57] is initially Dead and has 7 live neighbors</span><span class="a t m" style="left:2062px;top:141px;font-size:21.6px;color:#003eaa;">wasm_game_of_life.js<span style="color:#0074e8">:80:29</span></span><span class="a t m" style="left:61.9px;top:180px;font-size:21.6px;color:#0c0c0d;">    it becomes Dead</span><span class="a t m" style="left:2062px;top:180px;font-size:21.6px;color:#003eaa;">wasm_game_of_life.js<span style="color:#0074e8">:80:29</span></span><span class="a t m" style="left:61.9px;top:219px;font-size:21.6px;color:#0c0c0d;">cell[63, 58] is initially Alive and has 3 live neighbors</span><span class="a t m" style="left:2062px;top:219px;font-size:21.6px;color:#003eaa;">wasm_game_of_life.js<span style="color:#0074e8">:80:29</span></span><span class="a t m" style="left:61.9px;top:258px;font-size:21.6px;color:#0c0c0d;">    it becomes Alive</span><span class="a t m" style="left:2062px;top:258px;font-size:21.6px;color:#003eaa;">wasm_game_of_life.js<span style="color:#0074e8">:80:29</span></span><span class="a t m" style="left:61.9px;top:297px;font-size:21.6px;color:#0c0c0d;">cell[63, 59] is initially Dead and has 6 live neighbors</span><span class="a t m" style="left:2062px;top:297px;font-size:21.6px;color:#003eaa;">wasm_game_of_life.js<span style="color:#0074e8">:80:29</span></span><span class="a t m" style="left:61.9px;top:336px;font-size:21.6px;color:#0c0c0d;">    it becomes Dead</span><span class="a t m" style="left:2062px;top:336px;font-size:21.6px;color:#003eaa;">wasm_game_of_life.js<span style="color:#0074e8">:80:29</span></span><span class="a t m" style="left:61.9px;top:375px;font-size:21.6px;color:#0c0c0d;">cell[63, 60] is initially Alive and has 2 live neighbors</span><span class="a t m" style="left:2062px;top:375px;font-size:21.6px;color:#003eaa;">wasm_game_of_life.js<span style="color:#0074e8">:80:29</span></span><span class="a t m" style="left:61.9px;top:414px;font-size:21.6px;color:#0c0c0d;">    it becomes Alive</span><span class="a t m" style="left:2062px;top:414px;font-size:21.6px;color:#003eaa;">wasm_game_of_life.js<span style="color:#0074e8">:80:29</span></span><span class="a t m" style="left:61.9px;top:453px;font-size:21.6px;color:#0c0c0d;">cell[63, 61] is initially Dead and has 6 live neighbors</span><span class="a t m" style="left:2062px;top:453px;font-size:21.6px;color:#003eaa;">wasm_game_of_life.js<span style="color:#0074e8">:80:29</span></span><span class="a t m" style="left:61.9px;top:492px;font-size:21.6px;color:#0c0c0d;">    it becomes Dead</span><span class="a t m" style="left:2062px;top:492px;font-size:21.6px;color:#003eaa;">wasm_game_of_life.js<span style="color:#0074e8">:80:29</span></span><span class="a t m" style="left:61.9px;top:531px;font-size:21.6px;color:#0c0c0d;">cell[63, 62] is initially Alive and has 4 live neighbors</span><span class="a t m" style="left:2062px;top:531px;font-size:21.6px;color:#003eaa;">wasm_game_of_life.js<span style="color:#0074e8">:80:29</span></span><span class="a t m" style="left:61.9px;top:570px;font-size:21.6px;color:#0c0c0d;">    it becomes Dead</span><span class="a t m" style="left:2062px;top:570px;font-size:21.6px;color:#003eaa;">wasm_game_of_life.js<span style="color:#0074e8">:80:29</span></span><span class="a t m" style="left:61.9px;top:609px;font-size:21.6px;color:#0c0c0d;">cell[63, 63] is initially Alive and has 7 live neighbors</span><span class="a t m" style="left:2062px;top:609px;font-size:21.6px;color:#003eaa;">wasm_game_of_life.js<span style="color:#0074e8">:80:29</span></span><span class="a t m" style="left:61.9px;top:648px;font-size:21.6px;color:#0c0c0d;">    it becomes Dead</span><span class="a t m" style="left:2062px;top:648px;font-size:21.6px;color:#003eaa;">wasm_game_of_life.js<span style="color:#0074e8">:80:29</span></span></div><div class="a" style="left:3821px;top:1378px;width:24px;height:683px;background:#c4c6c5;border-left:1px solid #b2b3b0;"></div><div class="a" style="left:3827px;top:1975px;width:12px;height:80px;background:#787c7d;border-radius:6px;"></div><div class="a" style="left:1401px;top:2061px;width:2444px;height:2px;background:#dfdfe1;"></div>
<svg width="3854" height="2119" viewBox="0 0 3854 2119" style="pointer-events:none"><g fill="none" stroke="#b4b4b6" stroke-width="4" stroke-linecap="round" stroke-linejoin="round"><path d="M49 101H22M34 88.5L21.5 101L34 113.5"/><path d="M81 101H108M96 88.5L108.5 101L96 113.5" stroke="#6d6d70"/><path d="M166.5 108.5A13 13 0 1 1 163 90.5" stroke-linecap="butt"/><path d="M169 88.5V99.5H158" stroke-linejoin="miter"/><path d="M201.5 101L215 87.5L228.5 101"/><path d="M205 100.5V112.5Q205 115 207.5 115H222.5Q225 115 225 112.5V100.5"/></g><path d="M211 115V104Q211 101.5 213.5 101.5H216.5Q219 101.5 219 104V115Z" fill="#b4b4b6"/><rect x="214.8" y="106.5" width="2.2" height="2.4" fill="#323234"/><path d="M410.5 32.5L427.5 49.5M427.5 32.5L410.5 49.5" stroke="#bdbdbe" stroke-width="3" stroke-linecap="round"/><path d="M473 39H497M485 27V51" stroke="#b4b4b6" stroke-width="4" stroke-linecap="round"/><circle cx="513" cy="101" r="13" fill="none" stroke="#b4b4b6" stroke-width="2"/><circle cx="513" cy="95" r="2.3" fill="#b4b4b6"/><path d="M513 101.5V107.5" stroke="#b4b4b6" stroke-width="4" stroke-linecap="round"/><circle cx="3189" cy="101" r="4" fill="#b4b4b6"/><circle cx="3201" cy="101" r="4" fill="#b4b4b6"/><circle cx="3213" cy="101" r="4" fill="#b4b4b6"/><g fill="none" stroke="#b4b4b6" stroke-linecap="round" stroke-linejoin="round"><path d="M3239 92V89.5Q3239 87 3241.5 87H3256.5Q3259 87 3259 89.5V112.5Q3259 115 3256.5 115H3241.5Q3239 115 3239 112.5V107" stroke-width="4"/><path d="M3234 100.5H3250M3244.5 94.5L3250.5 100.5L3244.5 106.5" stroke-width="2"/><path d="M3240 111.5H3258" stroke-width="4" stroke-linecap="butt"/></g><rect x="3247" y="113" width="4" height="1.5" fill="#474749"/><path d="M3284.9 86.8h3.7v3.7h-3.7zM3291.1 86.8h3.7v3.7h-3.7zM3297.1 86.8h3.7v3.7h-3.7zM3303.2 86.8h3.7v3.7h-3.7zM3309.4 93.3h3.8v3h-3.8zM3309.4 99.2h3.8v3.1h-3.8zM3284.9 93.3h3.7v2.6h-3.7z" fill="#b4b4b6"/><path d="M3284.900 90.500V89.300Q3284.900 86.800 3287.400 86.800H3288.600V90.500ZM3309.400 86.800H3310.700Q3313.200 86.800 3313.200 89.300V90.500H3309.400ZM3309.400 105.100H3313.200V106.300Q3313.200 108.800 3310.700 108.800H3309.400Z" fill="#b4b4b6"/><g fill="none" stroke="#b4b4b6"><circle cx="3285.800" cy="99.800" r="3.600" stroke-width="2.700"/><circle cx="3285.800" cy="112" r="3.600" stroke-width="2.700"/><path d="M3289 102.200L3295.500 105.800" stroke-width="3.200"/></g><path d="M3288.300 109.400L3305.700 97L3308.300 98.300L3291.600 111.800ZM3297 108.800L3300.200 106.800L3308.300 113.800L3304.600 115.200Z" fill="#b4b4b6"/><path d="M3345.2 87.2L3349.4 96.5L3359.5 97.6L3352.0 104.4L3354.0 114.3L3345.2 109.3L3336.4 114.3L3338.4 104.4L3330.9 97.6L3341.0 96.5Z" fill="none" stroke="#b4b4b6" stroke-width="4" stroke-linejoin="round"/><g stroke="#b4b4b6" stroke-width="4" stroke-linecap="round" fill="none"><path d="M3623 89.500V112.800M3629 93.800V112.800M3635 91.400V112.800M3640.800 91.500L3649 112.600"/><rect x="3681" y="89" width="28" height="24" rx="4"/><path d="M3693.8 89V113" stroke-width="2.4" stroke-linecap="butt"/><path d="M3685 94H3689.5M3685 98H3689.5M3685 102H3689.5" stroke-width="1.8" stroke-linecap="butt"/><path d="M3805 91H3825M3805 101H3825M3805 111H3825"/></g><path d="M3755 85.3Q3761 89.2 3769 88.6V101Q3769 111 3755 117Q3741 111 3741 101V88.6Q3749 89.2 3755 85.3Z" fill="#800000"/><text x="3745.8" y="104.6" font-family="Liberation Sans,sans-serif" font-size="18" fill="#fff" stroke="#fff" stroke-width=".5" textLength="18" lengthAdjust="spacingAndGlyphs">uo</text><path d="M3802 32.5L3816 46.5M3816 32.5L3802 46.5" stroke="#eeeeec" stroke-width="3.6"/><path d="M3802 31L3816 45M3816 31L3802 45" stroke="#2e3436" stroke-width="4.4"/><g fill="none" stroke="#0c0c0d" stroke-width="2.1" stroke-linejoin="round"><path d="M1433 178H1421.5Q1420 178 1420 176.5V157Q1420 155.5 1421.5 155.5H1444.5Q1446 155.5 1446 157V166"/><path d="M1435 166L1447 171L1442 173L1446.5 178L1444.5 179.8L1440 174.8L1437.5 179.5Z" fill="#9a9a9c" stroke-width="2"/><rect x="1492" y="154" width="22" height="19" rx="2"/><path d="M1503 150V154M1503 173V177M1488 163.5H1492M1514 163.5H1518" stroke-linecap="round"/><rect x="1671.3" y="152.3" width="25.4" height="21" rx="2"/><path d="M1671.3 157.5H1696.7" stroke-width="2"/><path d="M1677 162.5L1681.5 166L1677 169.5" stroke-linecap="round"/><path d="M1840.5 154.3H1858.5L1865.5 162.8L1858.5 171.3H1840.5Q1838.5 171.3 1838.5 169.3V156.3Q1838.5 154.3 1840.5 154.3Z" stroke="#12bc00"/><path d="M2031 152.5Q2027 152.5 2027 156V160Q2027 163 2024 163Q2027 163 2027 166V170.5Q2027 174 2031 174M2039 152.5Q2043 152.5 2043 156V160Q2043 163 2046 163Q2043 163 2043 166V170.5Q2043 174 2039 174" stroke-linecap="round"/><path d="M2250 155A12.5 12.5 0 1 0 2252.5 163.5" stroke-linecap="round"/><circle cx="2240" cy="163" r="5"/><path d="M2243.5 159.5L2252 151.5" stroke-linecap="round"/><path d="M2232.5 169.5A10 10 0 0 0 2247.5 169.5" stroke="#8a8a8c" stroke-width="1.6"/><rect x="2449.3" y="152.2" width="13.6" height="21.4" rx="2"/><path d="M2441.5 159.8l3.300 -2.400l3.300 2.400M2464 159.8l3.300 -2.400l3.300 2.400M2441.5 164l3.300 -2.400l3.300 2.400M2464 164l3.300 -2.400l3.300 2.400M2441.5 168.3l3.300 -2.400l3.300 2.400M2464 168.3l3.300 -2.400l3.300 2.400" stroke-width="1.7" stroke-linecap="round"/><path d="M2613 154H2629M2617 165.700H2633" stroke="#8a8a8c" stroke-width="2"/><path d="M2621 159.800H2637M2613 171.800H2623" stroke-width="2"/><g fill="#f9f9fa"><ellipse cx="2799" cy="170.500" rx="9.900" ry="4.100"/><ellipse cx="2799" cy="163.300" rx="9.900" ry="4.100"/><ellipse cx="2799" cy="156" rx="9.900" ry="4.100"/></g><rect x="3510.3" y="155.3" width="25.4" height="23" rx="1.5"/><path d="M3510.3 169.5H3535.7M3524 169.5V178.3"/><path d="M3540 159H3555L3547.5 167Z" fill="#b6b6ba" stroke="none"/><g stroke="#0060df"><rect x="3566.3" y="155.3" width="25.4" height="23.4" rx="1.5"/><path d="M3566.3 160.5H3591.7" stroke-width="2"/><path d="M3572 165.5L3577 170L3572 174.5" stroke-linecap="round" stroke-width="2.6"/></g><rect x="3620.200" y="153.500" width="15.500" height="25" rx="1.5"/><path d="M3620.200 166.600H3635.700" stroke-width="2"/><circle cx="3628" cy="173" r="2.200" stroke-width="1.8"/><path d="M3671.5 150.7L3676.5 150.7L3677.0 154.5L3679.9 156.2L3683.5 154.7L3686.0 159.1L3682.9 161.4L3682.9 164.8L3686.0 167.1L3683.5 171.5L3679.9 170.0L3677.0 171.7L3676.5 175.5L3671.5 175.5L3671.0 171.7L3668.1 170.0L3664.5 171.5L3662.0 167.1L3665.1 164.8L3665.1 161.4L3662.0 159.1L3664.5 154.7L3668.1 156.2L3671.0 154.5Z" stroke-width="2.1"/><circle cx="3674" cy="163.100" r="3.200" stroke-width="2.1"/><rect x="3710.400" y="155.700" width="19.200" height="20.600" rx="1.5"/><path d="M3710.400 171H3729.600"/><path d="M3767 159.500H3762.500V172H3775.500V169"/><rect x="3770.900" y="153.700" width="12.700" height="12.400" rx="1"/><path d="M3770.900 161.300H3783.600" stroke-width="2"/><path d="M3812 157L3830 175M3830 157L3812 175" stroke-width="2.1" stroke-linecap="round"/></g><path d="M1409 272.5H1427L1418 283Z" fill="#cfcfd1"/><path d="M1413 468.5 L1423.5 478 L1413 487.5 Z" fill="#cfcfd1"/><path d="M1413 518.5 L1423.5 528 L1413 537.5 Z" fill="#cfcfd1"/><path d="M1413 568.5 L1423.5 578 L1413 587.5 Z" fill="#cfcfd1"/><circle cx="1452.700" cy="277.8" r="10.900" fill="#fff" stroke="#737376" stroke-width="2"/><g transform="translate(1452.700 277.8)" fill="#737376"><path d="M-9.500 -3.500Q-7.500 -8 -3 -9.500L0.500 -8.500L-0.500 -5.500L-3.500 -4L-2.500 -1.500L-5.500 1L-8 0.500Z"/><path d="M2.500 -9.300Q7.500 -7.500 9.500 -2.500L8.500 1L6.500 -1.500L4 -1L2 -4L4.500 -6Z"/><path d="M-4.500 2.500L-1 3.500L0.500 6L-1.500 9.500Q-4 9 -4.500 6.500Z"/><path d="M4.500 2L8 3Q7 6.500 4.500 8L3.500 5Z"/></g><circle cx="1452.700" cy="477.8" r="10.900" fill="#fff" stroke="#737376" stroke-width="2"/><g transform="translate(1452.700 477.8)" fill="#737376"><path d="M-9.500 -3.500Q-7.500 -8 -3 -9.500L0.500 -8.500L-0.500 -5.500L-3.500 -4L-2.500 -1.500L-5.500 1L-8 0.500Z"/><path d="M2.500 -9.300Q7.500 -7.500 9.500 -2.500L8.500 1L6.500 -1.500L4 -1L2 -4L4.500 -6Z"/><path d="M-4.500 2.500L-1 3.500L0.500 6L-1.500 9.500Q-4 9 -4.500 6.500Z"/><path d="M4.500 2L8 3Q7 6.500 4.500 8L3.500 5Z"/></g><circle cx="1452.700" cy="527.7" r="10.900" fill="#fff" stroke="#737376" stroke-width="2"/><g transform="translate(1452.700 527.7)" fill="#737376"><path d="M-9.500 -3.500Q-7.500 -8 -3 -9.500L0.500 -8.500L-0.500 -5.500L-3.500 -4L-2.500 -1.500L-5.500 1L-8 0.500Z"/><path d="M2.500 -9.300Q7.500 -7.500 9.500 -2.500L8.500 1L6.500 -1.500L4 -1L2 -4L4.500 -6Z"/><path d="M-4.500 2.500L-1 3.500L0.500 6L-1.500 9.500Q-4 9 -4.500 6.500Z"/><path d="M4.500 2L8 3Q7 6.500 4.500 8L3.500 5Z"/></g><path d="M1452.500 566.300L1463.300 572.400V584.800L1452.500 591L1441.700 584.800V572.400Z" fill="#a9dcf7" stroke="#d3ecfa" stroke-width="1.2"/><path d="M1452.500 571.200L1459 574.900L1452.500 578.600L1446 574.900Z" fill="#4d97d6"/><path d="M1445.800 575.600L1452 579.200V586.300L1445.800 582.700ZM1459.200 575.600L1453 579.200V586.300L1459.200 582.700Z" fill="#2f7fc6"/><path d="M1475.200 368.5H1485L1491 374.5V389.5H1475.200Z M1485 368.5V374.5H1491" fill="none" stroke="#8a8a8d" stroke-width="1.8"/><path d="M2228 223.5L2240.5 236M2240.5 223.5L2228 236" stroke="#6a6a6d" stroke-width="3"/><g fill="none" stroke="#77777a" stroke-width="2"><rect x="1914" y="213" width="26" height="21.5" rx="1"/><rect x="1915" y="214" width="5" height="19.500" fill="#c8c8ca" stroke="none"/><path d="M1921 213V234.5"/><path d="M1934.5 218.5V229.5L1926 224Z" fill="#d0d0d2"/><rect x="3206" y="213.5" width="26" height="21.5" rx="1"/><rect x="3226" y="214.5" width="5" height="19.500" fill="#c8c8ca" stroke="none"/><path d="M3225 213.5V235"/><path d="M3211.5 219V230L3220 224.5Z" fill="#d0d0d2"/></g><g fill="none" stroke="#4a4a4f" stroke-width="2" stroke-linecap="round"><path d="M1921.5 1286Q1918.5 1286 1918.5 1289V1293Q1918.5 1295.5 1916 1295.5Q1918.5 1295.5 1918.5 1298V1302Q1918.5 1305 1921.5 1305M1934.5 1286Q1937.5 1286 1937.5 1289V1293Q1937.5 1295.5 1940 1295.5Q1937.5 1295.5 1937.5 1298V1302Q1937.5 1305 1934.5 1305"/><path d="M1971 1295.5Q1985 1279 1999 1295.5Q1985 1312 1971 1295.5Z" stroke-width="2.2"/><circle cx="1985" cy="1295.5" r="3" fill="#4a4a4f" stroke="none"/></g><g fill="none" stroke="#45454a" stroke-width="2" stroke-linejoin="round" stroke-linecap="round"><path d="M3263.300 214.200V235.600L3279.700 224.900Z"/><path d="M3310.800 226.500A11.400 11.400 0 0 1 3333.500 227.600M3337.600 216.500L3333.500 227.600L3323.600 223.600"/><circle cx="3321" cy="233" r="2" fill="#45454a" stroke="none"/><path d="M3361.500 213.600H3375.200V231.500M3366.500 222.900L3375 232L3383.500 222.900M3361.500 236H3370.500M3379.500 236H3388.500" stroke-linecap="butt"/><path d="M3422.800 232.300V219.800H3440M3430.500 210.600L3440.500 219.800L3430.500 229.400M3412.300 236.900H3421.800M3426.200 236.900H3435.800" stroke-linecap="butt"/><path d="M3479.400 212.300H3490.700L3497.900 219.500V230.500L3490.700 237.700H3479.400L3472.200 230.500V219.500Z"/><path d="M3480 219.500V230.500M3489.900 219.500V230.500" stroke-linecap="butt"/></g><path d="M3253 268.8H3273L3263 280.4Z" fill="#9b9b9d" stroke="#9b9b9d" stroke-width="1.5" stroke-linejoin="round"/><path d="M3253 374.7H3273L3263 386.3Z" fill="#9b9b9d" stroke="#9b9b9d" stroke-width="1.5" stroke-linejoin="round"/><path d="M3253 481.1H3273L3263 492.7Z" fill="#9b9b9d" stroke="#9b9b9d" stroke-width="1.5" stroke-linejoin="round"/><path d="M3253 662.5H3273L3263 674.1Z" fill="#9b9b9d" stroke="#9b9b9d" stroke-width="1.5" stroke-linejoin="round"/><path d="M3818 271L3819.500 280.500L3810 279" fill="none" stroke="#4a4a4f" stroke-width="2"/><path d="M3817 286.500A9.800 9.800 0 1 1 3816.500 273.800" fill="none" stroke="#4a4a4f" stroke-width="2.2"/><path d="M3255 711.2H3272.900L3264 723Z" fill="#d4d4d6"/><path d="M3281.7 709.2h14.100M3281.7 714.7h7M3291.2 714.7h4.600M3281.7 720.2h14.100" stroke="#3e3e43" stroke-width="2.7" fill="none"/><path d="M3292.7 739.8V758L3304 748.9Z" fill="#d4d4d6"/><path d="M3292.7 772V790.3L3304 781.15Z" fill="#d4d4d6"/><path d="M3258.8 805.6V823.8L3270.1 814.7Z" fill="#d4d4d6"/><path d="M3281.7 806.6h14.100M3281.7 812.1h7M3291.2 812.1h4.600M3281.7 817.6h14.100" stroke="#3e3e43" stroke-width="2.7" fill="none"/><path d="M3258.8 839.7V857.9L3270.1 848.8Z" fill="#d4d4d6"/><path d="M3281.7 840.7h14.100M3281.7 846.2h7M3291.2 846.2h4.600M3281.7 851.7h14.100" stroke="#3e3e43" stroke-width="2.7" fill="none"/><path d="M3258.8 873.6V891.8L3270.1 882.7Z" fill="#d4d4d6"/><path d="M3281.7 874.6h14.100M3281.7 880.1h7M3291.2 880.1h4.600M3281.7 885.6h14.100" stroke="#3e3e43" stroke-width="2.7" fill="none"/><path d="M3258.8 905.7V923.9L3270.1 914.8Z" fill="#d4d4d6"/><g fill="none" stroke="#0c0c0d" stroke-width="2.4" stroke-linejoin="round"><path d="M1420 1343H1444M1427.500 1343V1338.500H1436.500V1343M1423 1343V1360Q1423 1362 1425 1362H1439Q1441 1362 1441 1360V1343"/><path d="M1428 1348V1357.500M1432 1348V1357.500M1436 1348V1357.500" stroke-width="2"/><path d="M1482.500 1340.500H1503.500L1496 1351V1363L1490 1364.500V1351Z"/><path d="M1486.500 1345.500H1499.500L1495.500 1351V1362.500L1490.500 1363.500V1351Z" fill="#9a9a9c" stroke="none"/></g><path d="M1413 2077L1425.500 2088L1413 2099M1424 2077L1436.500 2088L1424 2099" fill="none" stroke="#b9b9bb" stroke-width="1.8"/></svg>
</div>
</body></html>
